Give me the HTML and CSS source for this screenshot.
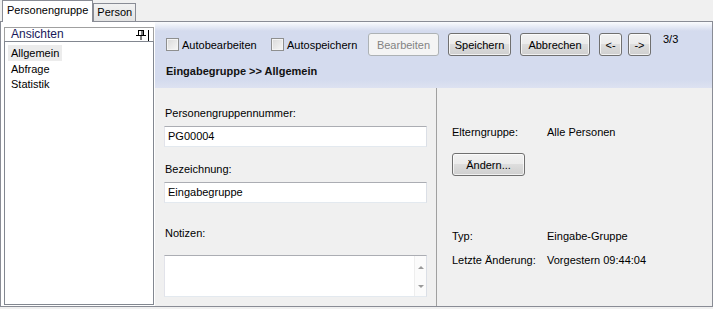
FILE: index.html
```html
<!DOCTYPE html>
<html lang="de">
<head>
  <meta charset="UTF-8" />
  <meta name="viewport" content="width=device-width, initial-scale=1.0" />
  <title>Personengruppe</title>
  <link rel="stylesheet" href="styles.css">
</head>
<body>
  <div class="tabs">
    <div class="tab active">Personengruppe</div>
    <div class="tab">Person</div>
  </div>

  <div class="page">
    <div class="sidebar">
      <div class="side-head">
        <span>Ansichten</span>
        <svg class="pin" width="16" height="11" viewBox="0 0 16 11">
          <rect x="4.5" y="0.5" width="5" height="5" fill="none" stroke="#000" />
          <line x1="8" y1="1" x2="8" y2="5" stroke="#000" />
          <line x1="2" y1="5.5" x2="12" y2="5.5" stroke="#000" />
          <line x1="7" y1="6" x2="7" y2="10" stroke="#000" />
          <line x1="14.5" y1="0" x2="14.5" y2="11" stroke="#000" />
        </svg>
      </div>
      <ul class="views">
        <li class="selected">Allgemein</li>
        <li>Abfrage</li>
        <li>Statistik</li>
      </ul>
    </div>

    <div class="main">
      <div class="header">
        <div class="toolbar">
          <label class="check first"><span class="box"></span>Autobearbeiten</label>
          <label class="check second"><span class="box"></span>Autospeichern</label>
          <button class="btn edit" disabled>Bearbeiten</button>
          <button class="btn save">Speichern</button>
          <button class="btn cancel">Abbrechen</button>
          <button class="btn nav">&lt;-</button>
          <button class="btn nav last">-&gt;</button>
          <span class="count">3/3</span>
        </div>
        <div class="title">Eingabegruppe &gt;&gt; Allgemein</div>
      </div>

      <div class="form">
        <div class="col left">
          <div class="label">Personengruppennummer:</div>
          <div class="field">PG00004</div>
          <div class="label gap">Bezeichnung:</div>
          <div class="field">Eingabegruppe</div>
          <div class="label notes-label">Notizen:</div>
          <div class="notes">
            <div class="scroll">
              <span class="arrow up"></span>
              <span class="arrow down"></span>
            </div>
          </div>
        </div>

        <div class="col right">
          <div class="row">
            <span class="key">Elterngruppe:</span>
            <span>Alle Personen</span>
          </div>
          <button class="btn change">Ändern...</button>
          <div class="row type">
            <span class="key">Typ:</span>
            <span>Eingabe-Gruppe</span>
          </div>
          <div class="row changed">
            <span class="key">Letzte Änderung:</span>
            <span>Vorgestern 09:44:04</span>
          </div>
        </div>
      </div>
    </div>
  </div>
</body>
</html>
```

FILE: styles.css
```css
body {
  margin: 0;
  background-color: #f0f0f0;
  font-family: "Liberation Sans", Arial, sans-serif;
  font-size: 11px;
  color: #000;
}

/* tab strip */
.tabs {
  display: flex;
  align-items: flex-end;
  height: 21px;
  padding-left: 2px;
}

.tab {
  height: 17px;
  line-height: 17px;
  padding: 0 3px;
  border: 1px solid #898c95;
  border-bottom: none;
  background: linear-gradient(#f2f2f2, #e3e3e3);
}

.tab.active {
  position: relative;
  z-index: 1;
  height: 21px;
  line-height: 18px;
  padding: 0 4px;
  margin-bottom: -1px;
  background: #fff;
}

.page {
  display: flex;
  height: 284px;
  border: 1px solid #898c95;
  background: #fff;
}

/* left views panel */
.sidebar {
  display: flex;
  flex-direction: column;
  width: 150px;
  margin: 5px 0 1px 3px;
}

.side-head {
  display: flex;
  align-items: center;
  justify-content: space-between;
  height: 13px;
  padding: 0 3px 0 6px;
  border: 1px solid #a0a0a0;
  border-bottom: none;
  line-height: 13px;
  font-size: 12px;
  color: #18185a;
}

.pin {
  margin-top: 1px;
}

.views {
  flex: 1;
  margin: 0;
  padding: 3px 0 0 3px;
  list-style: none;
  border: 1px solid #828790;
}

.views li {
  display: block;
  width: fit-content;
  height: 16px;
  line-height: 16px;
  padding: 0 3px;
  margin-bottom: -0.5px;
}

.views li.selected {
  background: #ececec;
}

/* main area */
.main {
  flex: 1;
  display: flex;
  flex-direction: column;
  margin-left: 1px;
}

.header {
  height: 66px;
  box-sizing: border-box;
  padding: 11px 0 0 11px;
  background: linear-gradient(#fafbfd 0, #d4dbee 9px, #d4dbee 58px, #dde2f1 66px);
}

.toolbar {
  display: flex;
  align-items: center;
  height: 23px;
}

.check {
  display: flex;
  align-items: center;
  gap: 3px;
}

.check.first {
  width: 105px;
}

.check.second {
  width: 97px;
}

.box {
  width: 11px;
  height: 11px;
  border: 1px solid #8e8f8f;
  background: linear-gradient(135deg, #d9d9d9, #f7f7f7);
  box-shadow: inset 0 0 0 1px #f4f4f4;
}

.btn {
  height: 23px;
  padding: 0;
  margin-right: 9px;
  border: 1px solid #707070;
  border-radius: 3px;
  background: linear-gradient(#f2f2f2 0%, #ebebeb 50%, #dddddd 50%, #cfcfcf 100%);
  box-shadow: inset 0 0 0 1px rgba(255, 255, 255, 0.7);
  font-family: inherit;
  font-size: 11px;
  color: #000;
}

.btn:disabled {
  border-color: #adb2b5;
  background: #f4f4f4;
  box-shadow: none;
  color: #838383;
}

.btn.edit {
  width: 71px;
}

.btn.save {
  width: 63px;
}

.btn.cancel {
  width: 70px;
}

.btn.nav {
  width: 23px;
  margin-right: 6px;
}

.btn.nav.last {
  margin-right: 12px;
}

.count {
  align-self: flex-start;
  margin-top: -1px;
  line-height: 14px;
}

.title {
  margin-top: 8px;
  line-height: 14px;
  font-weight: bold;
  color: #111;
}

/* form */
.form {
  flex: 1;
  display: flex;
  background: #f0f0f0;
}

.col.left {
  width: 282px;
  box-sizing: border-box;
  padding: 18px 0 0 10px;
  border-right: 1px solid #a0a0a0;
}

.label {
  line-height: 14px;
}

.label.gap {
  margin-top: 15px;
}

.label.notes-label {
  margin-top: 23px;
}

.field {
  width: 263px;
  height: 21px;
  box-sizing: border-box;
  margin: 6px 0 0 -1px;
  padding-left: 3px;
  line-height: 19px;
  background: #fff;
  border: 1px solid;
  border-color: #abadb3 #dbdfe6 #e3e9ef #e2e3ea;
}

.notes {
  display: flex;
  justify-content: flex-end;
  width: 263px;
  height: 42px;
  box-sizing: border-box;
  margin: 15px 0 0 -1px;
  background: #fff;
  border: 1px solid;
  border-color: #abadb3 #dbdfe6 #e3e9ef #e2e3ea;
}

.scroll {
  display: flex;
  flex-direction: column;
  align-items: center;
  justify-content: space-between;
  width: 11px;
  padding: 10px 0 8px;
  border-left: 1px solid #eeeeee;
  background: #fbfbfb;
}

.arrow {
  width: 0;
  height: 0;
  border-left: 3px solid transparent;
  border-right: 3px solid transparent;
}

.arrow.up {
  border-bottom: 3px solid #9a9a9a;
}

.arrow.down {
  border-top: 3px solid #9a9a9a;
}

.col.right {
  flex: 1;
  padding: 37px 0 0 15px;
}

.row {
  display: flex;
  line-height: 14px;
}

.key {
  width: 95px;
}

.btn.change {
  display: block;
  width: 73px;
  margin-top: 14px;
}

.row.type {
  margin-top: 53px;
}

.row.changed {
  margin-top: 10px;
}
```
